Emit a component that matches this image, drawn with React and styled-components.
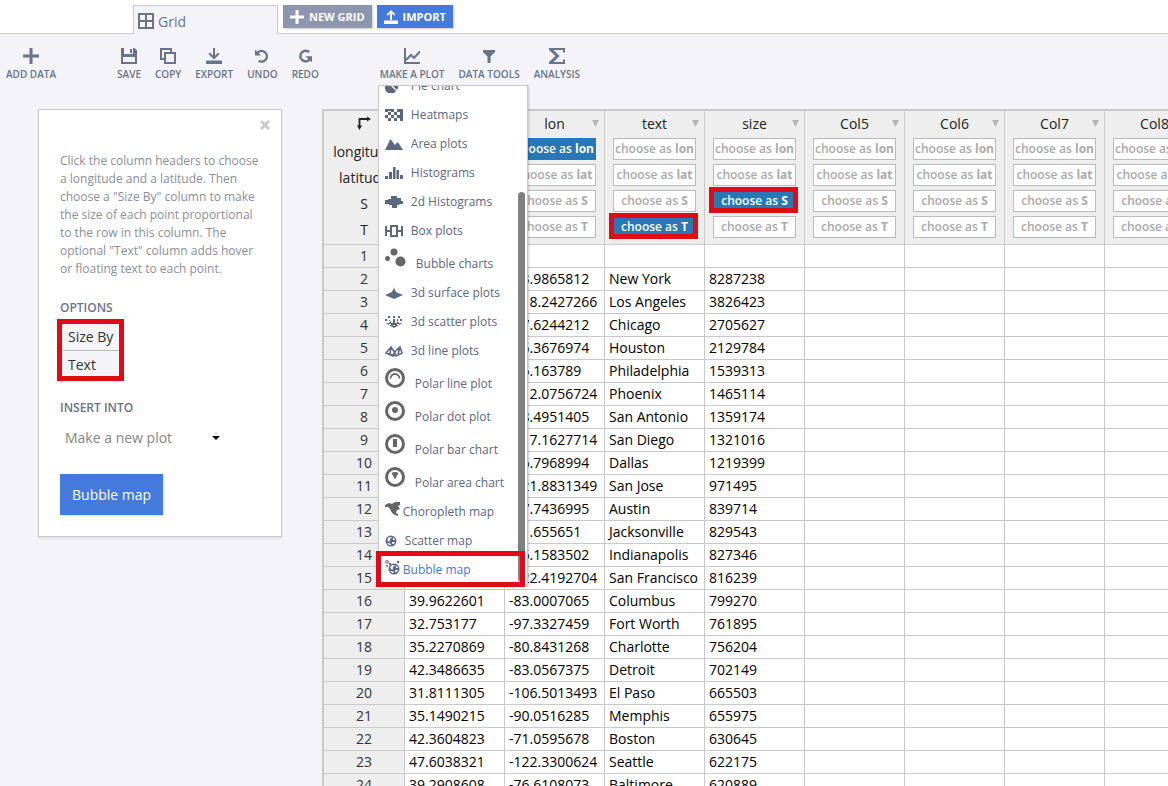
import React from "react";
import styled, { createGlobalStyle, css } from "styled-components";

const INK = "#69738a";
const LINE = "#c9c9c9";
const BLUE = "#447adb";
const RED = "#e10b17";

const GlobalStyle = createGlobalStyle`
  *, *::before, *::after { box-sizing: border-box; }
  body { margin: 0; font-family: "Open Sans", "Noto Sans", sans-serif; background: #f3f3f8; }
  button, select { font-family: inherit; margin: 0; }
  ul, p, h2 { margin: 0; padding: 0; }
`;

const Page = styled.div`
  height: 100vh;
  overflow: hidden;
  display: flex;
  flex-direction: column;
`;

/* ---------- top strip ---------- */
const TopBar = styled.header`
  height: 34px;
  flex: none;
  display: flex;
  align-items: flex-start;
  gap: 5px;
  padding: 5px 0 0 133px;
  background: #fff;
  border-bottom: 1px solid ${LINE};
`;

const GridTab = styled.a`
  width: 145px;
  height: 29px;
  display: flex;
  align-items: center;
  gap: 4px;
  padding: 2px 4px 0;
  background: #f3f3f8;
  border: 1px solid ${LINE};
  border-bottom: 0;
  color: ${INK};
  font-size: 14px;
  text-decoration: none;
`;

const TopButton = styled.button`
  height: 23px;
  display: flex;
  align-items: center;
  gap: 5px;
  padding: 0 7px;
  border: 0;
  background: ${(p) => p.$bg};
  box-shadow: 1px 1px 2px rgba(0, 0, 0, 0.2);
  color: #fff;
  font-size: 11px;
  font-weight: 700;
`;

/* ---------- toolbar ---------- */
const Toolbar = styled.nav`
  height: 75px;
  flex: none;
  display: flex;
  gap: 61px;
  padding: 14px 6px 0;
`;

const ToolGroup = styled.div`
  display: flex;
  gap: 14px;
`;

const ToolSlot = styled.div`
  position: relative;
  height: 34px;
`;

const ToolButton = styled.button`
  display: flex;
  flex-direction: column;
  align-items: center;
  gap: 3px;
  padding: 0;
  border: 0;
  background: none;
  color: ${INK};
  font-size: 10px;
  font-weight: 600;
  line-height: 14px;
  white-space: nowrap;
`;

/* ---------- plot menu ---------- */
const Menu = styled.div`
  position: absolute;
  z-index: 2;
  top: 37px;
  left: -2px;
  width: 150px;
  height: 500px;
  background: #fff;
  border: 1px solid ${LINE};
  box-shadow: 1px 1px 2px rgba(0, 0, 0, 0.2);
`;

const MenuList = styled.ul`
  height: 498px;
  overflow: hidden;
  display: flex;
  flex-direction: column;
  justify-content: flex-end;
  list-style: none;
`;

const MenuItem = styled.li`
  flex: none;
  position: relative;
`;

const MenuButton = styled.button`
  width: 100%;
  height: ${(p) => (p.$kind === "round" ? 33 : 29)}px;
  display: flex;
  align-items: center;
  gap: ${(p) => ({ round: 10, wide: 8, map: 3, globe: 8 })[p.$kind]}px;
  padding: 0 0 0 6px;
  border: 0;
  background: none;
  color: ${(p) => (p.$active ? BLUE : "#5d677f")};
  font-size: 12px;
  line-height: 29px;
  white-space: nowrap;

  svg { flex: none; color: #5d677f; }
  ${(p) => p.$kind === "round" && css`
    svg { color: #666; margin-bottom: 8px; }
    span { margin-top: 3px; }
  `}
  ${(p) => p.$kind === "map" && css`
    svg { margin-bottom: 4px; }
  `}
`;

const ScrollThumb = styled.div`
  position: absolute;
  top: 106px;
  right: 2px;
  bottom: 2px;
  width: 7px;
  border-radius: 4px;
  background: #808080;
`;

/* Red frame that calls out the part it lies over. */
const Callout = styled.span`
  position: absolute;
  z-index: 1;
  inset: ${(p) => p.$inset};
  border: 5px solid ${RED};
  pointer-events: none;
`;

/* ---------- workspace ---------- */
const Workspace = styled.main`
  flex: 1;
  min-height: 0;
  display: flex;
  align-items: flex-start;
  gap: 40px;
  padding-left: 38px;
`;

const Panel = styled.aside`
  width: 244px;
  flex: none;
  display: flex;
  flex-direction: column;
  align-items: flex-start;
  padding: 8px 21px 21px;
  background: #fff;
  border: 1px solid ${LINE};
  box-shadow: 0 1px 2px rgba(0, 0, 0, 0.1);
`;

const CloseButton = styled.button`
  align-self: flex-end;
  width: 12px;
  height: 14px;
  display: flex;
  align-items: center;
  justify-content: center;
  margin-right: -11px;
  padding: 0;
  border: 0;
  background: none;
  color: #ccc;
`;

const Help = styled.p`
  margin-top: 20px;
  color: #8b8f99;
  font-size: 12px;
  line-height: 18px;
`;

const Heading = styled.h2`
  margin-top: 22px;
  color: ${INK};
  font-size: 12px;
  font-weight: 600;
  line-height: 16px;
`;

const Options = styled.ul`
  position: relative;
  width: 61px;
  margin-top: 6px;
  list-style: none;
`;

const Option = styled.button`
  width: 100%;
  height: 28px;
  padding: 0 8px;
  border: 0;
  border-top: ${(p) => (p.$first ? 0 : 1)}px solid #bbb;
  background: #f3f3f8;
  color: #333;
  font-size: 14px;
  text-align: left;
  white-space: nowrap;
`;

const SelectWrap = styled.div`
  display: flex;
  align-items: center;
  margin-top: 9px;

  svg { margin-left: -13px; pointer-events: none; }
`;

const Select = styled.select`
  appearance: none;
  width: 165px;
  height: 25px;
  padding: 0 20px 0 5px;
  border: 0;
  background: none;
  color: #858585;
  font-size: 14px;
`;

const Submit = styled.button`
  height: 41px;
  margin-top: 24px;
  padding: 0 12px;
  border: 0;
  background: ${BLUE};
  box-shadow: 1px 1px 2px rgba(0, 0, 0, 0.15);
  color: #fff;
  font-size: 14px;
`;

/* ---------- data grid ---------- */
const GridArea = styled.section`
  flex: 1;
  min-width: 0;
  height: 100%;
  overflow: hidden;
  border-top: 2px solid ${LINE};
  border-left: 2px solid ${LINE};
`;

const Table = styled.table`
  width: 881px;
  table-layout: fixed;
  border-collapse: separate;
  border-spacing: 0;
  background: #fff;
  color: #000;
  font-size: 14px;
`;

const HeadCell = styled.th`
  width: ${(p) => (p.$corner ? 81 : 100)}px;
  height: 134px;
  padding: 0;
  vertical-align: top;
  background: #eee;
  border-right: 1px solid ${LINE};
  border-bottom: 1px solid ${LINE};
  color: #222;
  font-weight: 400;
`;

const CornerIcon = styled.div`
  height: 28px;
  display: flex;
  align-items: center;
  justify-content: center;
  padding-bottom: 4px;
`;

const AxisLabel = styled.div`
  line-height: 26px;
`;

const NameRow = styled.div`
  height: 27px;
  display: grid;
  grid-template-columns: 1fr auto 1fr;
  align-items: center;
  padding: 0 5px 2px;

  span { grid-column: 2; }
  svg { justify-self: end; }
`;

const Choices = styled.div`
  display: flex;
  flex-direction: column;
  gap: 4px;
  padding: 0 8px;
`;

const Choice = styled.button`
  position: relative;
  height: 22px;
  padding: 0;
  border: 1px solid ${(p) => (p.$on ? "#2977b5" : "#bbb")};
  background: ${(p) => (p.$on ? "#2977b5" : "#fff")};
  color: ${(p) => (p.$on ? "#fff" : "#aaa")};
  font-size: 12px;
  font-weight: 600;
  line-height: 18px;
  white-space: nowrap;

  b { font-weight: 700; }
`;

const RowHead = styled.th`
  height: 23px;
  padding: 0;
  background: #eee;
  border-right: 1px solid ${LINE};
  border-bottom: 1px solid ${LINE};
  color: #333;
  font-weight: 400;
  line-height: 22px;
`;

const Cell = styled.td`
  height: 23px;
  padding: 0 4px;
  border-right: 1px solid ${LINE};
  border-bottom: 1px solid ${LINE};
  line-height: 22px;
  white-space: nowrap;
`;

/* ---------- icons ---------- */
const Icon = ({ w = 16, h = 16, children }) => (
  <svg width={w} height={h} viewBox={`0 0 ${w} ${h}`} fill="currentColor" aria-hidden="true">
    {children}
  </svg>
);

const icons = {
  grid: <Icon><path fill="none" stroke="currentColor" strokeWidth="2" d="M1 1h14v14H1zM8 1v14M1 8h14" /></Icon>,
  plus: <Icon><path d="M6.500 0h3v6.500H16v3H9.500V16h-3V9.500H0v-3h6.500z" /></Icon>,
  plusSmall: <Icon w={14} h={14}><path d="M5.500 0h3v5.500H14v3H8.500V14h-3V8.500H0v-3h5.500z" /></Icon>,
  upload: <Icon w={14} h={14}><path d="M7 0l4.500 4.500-1.200 1.200L8 3.500V10H6V3.500L3.700 5.700 2.500 4.500zM0 10.500h14V14H0z" /></Icon>,
  save: <Icon><path fillRule="evenodd" d="M0 0h3v6h9V0h1.500L16 2.500V16H0zM2 9v5h12V9z" /><path d="M9 1h2v4H9z" /></Icon>,
  copy: <Icon><path fill="none" stroke="currentColor" strokeWidth="2" d="M4 11H1V1h10v3M5 5h10v10H5z" /></Icon>,
  exportFile: <Icon><path d="M7 0h2v7.500l3-3L13.500 6 8 11.500 2.500 6 4 4.500l3 3zM0 12.500h16V16H0z" /></Icon>,
  undo: <Icon><path fill="none" stroke="currentColor" strokeWidth="2.400" d="M3.800 4.600A5.300 5.300 0 1 1 4.600 12.700" /><path d="M1 1.500V7.500H7z" /></Icon>,
  redo: <Icon><path fill="none" stroke="currentColor" strokeWidth="2.400" d="M12.200 4.200A5.300 5.300 0 1 0 13 11" /><path d="M8.500 8.300H15v6z" /></Icon>,
  line: <Icon><path fill="none" stroke="currentColor" strokeWidth="2" d="M1 0v15h15M2 12l5-5 3 3 6-6.500" /></Icon>,
  filter: <Icon><path d="M2 2h12v2l-4.500 4.500V15h-3V8.500L2 4z" /></Icon>,
  sigma: <Icon><path d="M0 0h16v4.500h-2V2H4.500l6 6-6 6H14v-2.500h2V16H0v-2l6.500-6L0 2z" /></Icon>,
  close: <Icon w={10} h={10}><path stroke="currentColor" strokeWidth="3" d="M1 1l8 8M9 1l-8 8" /></Icon>,
  caret: <Icon w={8} h={4}><path fill="#000" d="M0 0h8L4 4z" /></Icon>,
  sort: <Icon w={7} h={7}><path fill="#b5b5b5" d="M0 0h7L3.500 7z" /></Icon>,
  corner: <Icon w={14} h={14}><path fill="none" stroke="#222" strokeWidth="1.800" d="M2.500 11V3H11" /><path fill="#222" d="M0 9.500h5L2.500 14zM10 .5V5.500L14 3z" /></Icon>,

  pie: <Icon w={18} h={14}><path d="M6 7L1 5a6 6 0 1 0 10 7zM7 6l5 5a6 6 0 0 0 1-5zM7 5V0a6 6 0 0 1 5 4z" /></Icon>,
  heat: (
    <Icon w={18} h={12}>
      {[0, 1, 2, 3].map((r) =>
        [0, 1, 2, 3, 4, 5].filter((c) => (c + r) % 2 === 0).map((c) => (
          <rect key={`${r}-${c}`} x={c * 3} y={r * 3} width="3" height="3" />
        ))
      )}
      <path d="M1 0h5v2H1zM12 0h6v3h-6zM15 6h3v3h-3z" />
    </Icon>
  ),
  area: <Icon w={18} h={12}><path d="M0 12l4.500-9 1-2L10 7l2-2.500 1.500.5L18 12z" /></Icon>,
  hist: <Icon w={18} h={12}><path d="M0 9h3v3H0zM4 5h3v7H4zM8 0h2.500v12H8zM11.500 3H14v9h-2.500zM15 8h3v4h-3z" /></Icon>,
  hist2: <Icon w={18} h={12}><path d="M6 0h6v2h4v3h2v3h-4v1h-2v3H7V9H4V8H0V4h3V3h3z" /></Icon>,
  box: <Icon w={18} h={12}><path fillRule="evenodd" d="M0 1h2v4h3V0h8v5h3V1h2v10h-2V7h-3v5H5V7H2v4H0zM7 2v8h4V2z" /></Icon>,
  bubble: <Icon w={21} h={20}><circle cx="2.500" cy="10.500" r="2.500" /><circle cx="9" cy="4" r="3.500" /><circle cx="15.500" cy="13.500" r="5" /></Icon>,
  surface: <Icon w={18} h={12}><path d="M9 0q1 5 4 6l5 2-9 4-9-4 5-2q3-1 4-6z" /></Icon>,
  scatter3: (
    <Icon w={18} h={12}>
      <path d="M1 7l3 0 2-2 1 2h1V3h2v4h1l1-2 2 2h3l-3 2-5 3-5-3z" />
      <path fill="#fff" d="M4 8h2v1H4zM8 9h2v1H8zM12 8h2v1h-2zM6 6h1v1H6zM11 6h1v1h-1z" />
      <path d="M0 3h2v2H0zM3 0h2v2H3zM4 4h1v1H4zM8 0h2v2H8zM13 0h2v2h-2zM15 3h2v2h-2zM12 3h1v2h-1z" />
    </Icon>
  ),
  line3: <Icon w={18} h={12}><path fill="none" stroke="currentColor" strokeWidth="1.600" d="M1 8l5-6 3.500 5L15 2l2 6-6 3zM1 8l7 3 1.500-4M6 2l-1 7M11 11L9.500 7M15 2l-2 7" /></Icon>,
  polarLine: <Icon w={20} h={20}><circle cx="10" cy="10" r="8.500" fill="none" stroke="currentColor" strokeWidth="3" /><path fill="none" stroke="currentColor" strokeWidth="1.800" d="M5.500 10.500a4.500 4.500 0 0 1 9 0" /></Icon>,
  polarDot: <Icon w={20} h={20}><circle cx="10" cy="10" r="8.500" fill="none" stroke="currentColor" strokeWidth="3" /><circle cx="10" cy="9" r="3" /></Icon>,
  polarBar: <Icon w={20} h={20}><circle cx="10" cy="10" r="8.500" fill="none" stroke="currentColor" strokeWidth="3" /><path d="M8 5h4v8H8z" /></Icon>,
  polarArea: <Icon w={20} h={20}><circle cx="10" cy="10" r="8.500" fill="none" stroke="currentColor" strokeWidth="3" /><path d="M6.500 6q3.500-2 7 0L10 12.500z" /></Icon>,
  america: <Icon w={15} h={15}><path fill="#666" d="M0 3l4-2 3 1 3-2 5 0v3l-2 1 2 3-3 1-1 3 2 1v2l-3-1-3-2-2-4-2-2-3 0z" /></Icon>,
  globe: (
    <Icon w={12} h={12}>
      <circle cx="6" cy="6" r="5.500" />
      <path fill="#e4e7ec" d="M2 4l2-2h2l1 1-2 1v2L4 7 3 6zM8 2l2 2v1H8zM2 8l2 0 2 1v1H4zM7 7h3L9 9 7 9z" />
    </Icon>
  ),
  bubbleGlobe: (
    <Icon w={15} h={15}>
      <circle cx="9" cy="9" r="5.500" />
      <path fill="#e4e7ec" d="M5 7l2-2h2l1 1-2 1v2l-1 1-1-1zM11 5l2 2v1h-2zM5 11l2 0 2 1v1H7zM10 10h3l-1 2-2 0z" />
      <circle cx="2" cy="2" r="1.400" fill="none" stroke="currentColor" /><circle cx="5" cy="4" r="1.200" /><circle cx="13" cy="2" r="1.300" /><circle cx="2" cy="6" r="1" />
    </Icon>
  ),
};

/* ---------- data ---------- */
const leftTools = [
  ["SAVE", "save"], ["COPY", "copy"], ["EXPORT", "exportFile"], ["UNDO", "undo"], ["REDO", "redo"],
];

const plots = [
  ["Pie chart", "pie", "wide"],
  ["Heatmaps", "heat", "wide"],
  ["Area plots", "area", "wide"],
  ["Histograms", "hist", "wide"],
  ["2d Histograms", "hist2", "wide"],
  ["Box plots", "box", "wide"],
  ["Bubble charts", "bubble", "round"],
  ["3d surface plots", "surface", "wide"],
  ["3d scatter plots", "scatter3", "wide"],
  ["3d line plots", "line3", "wide"],
  ["Polar line plot", "polarLine", "round"],
  ["Polar dot plot", "polarDot", "round"],
  ["Polar bar chart", "polarBar", "round"],
  ["Polar area chart", "polarArea", "round"],
  ["Choropleth map", "america", "map"],
  ["Scatter map", "globe", "globe"],
  ["Bubble map", "bubbleGlobe", "map"],
];

const columns = [
  { name: "lat", on: "lat" },
  { name: "lon", on: "lon" },
  { name: "text", on: "T", marked: true },
  { name: "size", on: "S", marked: true },
  { name: "Col5" }, { name: "Col6" }, { name: "Col7" }, { name: "Col8" },
];

const rows = [
  [],
  ["40.7305991", "-73.9865812", "New York", "8287238"],
  ["34.053717", "-118.2427266", "Los Angeles", "3826423"],
  ["41.8755546", "-87.6244212", "Chicago", "2705627"],
  ["29.7589382", "-95.3676974", "Houston", "2129784"],
  ["39.952335", "-75.163789", "Philadelphia", "1539313"],
  ["33.4467681", "-112.0756724", "Phoenix", "1465114"],
  ["29.4246002", "-98.4951405", "San Antonio", "1359174"],
  ["32.7174209", "-117.1627714", "San Diego", "1321016"],
  ["32.7762719", "-96.7968994", "Dallas", "1219399"],
  ["37.3438502", "-121.8831349", "San Jose", "971495"],
  ["30.2711286", "-97.7436995", "Austin", "839714"],
  ["30.3321838", "-81.655651", "Jacksonville", "829543"],
  ["39.7683331", "-86.1583502", "Indianapolis", "827346"],
  ["37.7792808", "-122.4192704", "San Francisco", "816239"],
  ["39.9622601", "-83.0007065", "Columbus", "799270"],
  ["32.753177", "-97.3327459", "Fort Worth", "761895"],
  ["35.2270869", "-80.8431268", "Charlotte", "756204"],
  ["42.3486635", "-83.0567375", "Detroit", "702149"],
  ["31.8111305", "-106.5013493", "El Paso", "665503"],
  ["35.1490215", "-90.0516285", "Memphis", "655975"],
  ["42.3604823", "-71.0595678", "Boston", "630645"],
  ["47.6038321", "-122.3300624", "Seattle", "622175"],
  ["39.2908608", "-76.6108073", "Baltimore", "620889"],
];

const Tool = ({ label, icon, children }) => (
  <ToolSlot>
    <ToolButton type="button">{icons[icon]}{label}</ToolButton>
    {children}
  </ToolSlot>
);

const PlotMenu = () => (
  <Menu>
    <MenuList>
      {plots.map(([label, icon, kind]) => (
        <MenuItem key={label}>
          <MenuButton type="button" $kind={kind} $active={label === "Bubble map"}>
            {icons[icon]}<span>{label}</span>
          </MenuButton>
        </MenuItem>
      ))}
    </MenuList>
    <ScrollThumb />
    <Callout $inset="465px 2px -3px -3px" />
  </Menu>
);

const SettingsPanel = () => (
  <Panel>
    <CloseButton type="button" aria-label="Close">{icons.close}</CloseButton>
    <Help>
      Click the column headers to choose a longitude and a latitude. Then choose a "Size By" column
      to make the size of each point proportional to the row in this column. The optional "Text"
      column adds hover or floating text to each point.
    </Help>
    <Heading>OPTIONS</Heading>
    <Options>
      <li><Option type="button" $first>Size By</Option></li>
      <li><Option type="button">Text</Option></li>
      <Callout as="li" aria-hidden="true" $inset="-3px" />
    </Options>
    <Heading as="label" htmlFor="target">INSERT INTO</Heading>
    <SelectWrap>
      <Select id="target"><option>Make a new plot</option></Select>
      {icons.caret}
    </SelectWrap>
    <Submit type="button">Bubble map</Submit>
  </Panel>
);

const DataGrid = () => (
  <GridArea>
    <Table>
      <thead>
        <tr>
          <HeadCell $corner>
            <CornerIcon>{icons.corner}</CornerIcon>
            {["longitude", "latitude", "S", "T"].map((axis) => <AxisLabel key={axis}>{axis}</AxisLabel>)}
          </HeadCell>
          {columns.map((col) => (
            <HeadCell key={col.name} scope="col">
              <NameRow><span>{col.name}</span>{icons.sort}</NameRow>
              <Choices>
                {["lon", "lat", "S", "T"].map((key) => (
                  <Choice key={key} type="button" $on={col.on === key}>
                    choose as <b>{key}</b>
                    {col.marked && col.on === key && <Callout $inset="-4px -3px -2px -5px" />}
                  </Choice>
                ))}
              </Choices>
            </HeadCell>
          ))}
        </tr>
      </thead>
      <tbody>
        {rows.map((row, i) => (
          <tr key={i}>
            <RowHead scope="row">{i + 1}</RowHead>
            {columns.map((col, c) => <Cell key={col.name}>{row[c]}</Cell>)}
          </tr>
        ))}
      </tbody>
    </Table>
  </GridArea>
);

export default function App() {
  return (
    <Page>
      <GlobalStyle />
      <TopBar>
        <GridTab href="#grid">{icons.grid}Grid</GridTab>
        <TopButton type="button" $bg="#8e96af">{icons.plusSmall}NEW GRID</TopButton>
        <TopButton type="button" $bg={BLUE}>{icons.upload}IMPORT</TopButton>
      </TopBar>
      <Toolbar>
        <ToolGroup><Tool label="ADD DATA" icon="plus" /></ToolGroup>
        <ToolGroup>
          {leftTools.map(([label, icon]) => <Tool key={label} label={label} icon={icon} />)}
        </ToolGroup>
        <ToolGroup>
          <Tool label="MAKE A PLOT" icon="line"><PlotMenu /></Tool>
          <Tool label="DATA TOOLS" icon="filter" />
          <Tool label="ANALYSIS" icon="sigma" />
        </ToolGroup>
      </Toolbar>
      <Workspace>
        <SettingsPanel />
        <DataGrid />
      </Workspace>
    </Page>
  );
}
